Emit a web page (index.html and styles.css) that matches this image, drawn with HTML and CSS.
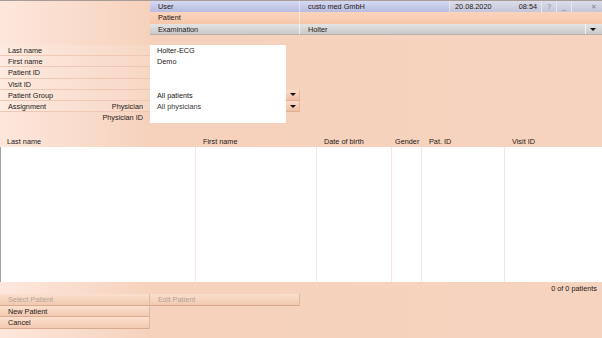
FILE: index.html
```html
<!DOCTYPE html>
<html lang="en">
<head>
    <meta charset="UTF-8">
    <title>Patient</title>
    <link rel="stylesheet" href="styles.css">
</head>
<body>
    <div class="top">
        <div class="topspace"></div>
        <div class="bars">
            <div class="bar user">
                <span class="cell c1">User</span>
                <span class="cell c2">custo med GmbH</span>
                <span class="cell date"><span>20.08.2020</span><span>08:54</span></span>
                <span class="cell ico">?</span>
                <span class="cell ico">_</span>
                <span class="cell close">&#x2715;</span>
            </div>
            <div class="bar patient">
                <span class="cell c1">Patient</span>
                <span class="cell grow"></span>
            </div>
            <div class="bar exam">
                <span class="cell c1">Examination</span>
                <span class="cell grow">Holter</span>
                <span class="arrow"></span>
            </div>
        </div>
    </div>

    <div class="form">
        <div class="lbl">Last name</div>
        <div class="inp">Holter-ECG</div>
        <div></div>
        <div class="lbl">First name</div>
        <div class="inp">Demo</div>
        <div></div>
        <div class="lbl">Patient ID</div>
        <div class="inp"></div>
        <div></div>
        <div class="lbl">Visit ID</div>
        <div class="inp"></div>
        <div></div>
        <div class="lbl">Patient Group</div>
        <div class="inp">All patients</div>
        <div class="drop"><span class="arrow"></span></div>
        <div class="lbl split"><span>Assignment</span><span>Physician</span></div>
        <div class="inp sel">All physicians</div>
        <div class="drop"><span class="arrow"></span></div>
        <div class="lbl noline right">Physician ID</div>
        <div class="inp"></div>
        <div></div>
    </div>

    <div class="table">
        <div class="thead">
            <div class="col w1">Last name</div>
            <div class="col w2">First name</div>
            <div class="col w3">Date of birth</div>
            <div class="col w4">Gender</div>
            <div class="col w5">Pat. ID</div>
            <div class="col w6">Visit ID</div>
        </div>
        <div class="tbody">
            <div class="col w1"></div>
            <div class="col w2"></div>
            <div class="col w3"></div>
            <div class="col w4"></div>
            <div class="col w5"></div>
            <div class="col w6"></div>
        </div>
    </div>

    <div class="count">0 of 0 patients</div>

    <div class="buttons">
        <div class="btnrow">
            <div class="btn off">Select Patient</div>
            <div class="btn off">Edit Patient</div>
        </div>
        <div class="btn">New Patient</div>
        <div class="btn">Cancel</div>
    </div>
</body>
</html>
```

FILE: styles.css
```css
html, body {
    margin: 0;
    padding: 0;
}
body {
    width: 602px;
    height: 338px;
    overflow: hidden;
    font-family: "Liberation Sans", Arial, sans-serif;
    font-size: 7.3px;
    color: #1e1816;
    background: linear-gradient(to right, #fde7dc 0, #f6d2bd 150px, #f6d3be 100%);
    border-top: 1px solid #a89c98;
    box-sizing: border-box;
}

/* top bars */
.top {
    display: flex;
    height: 34px;
}
.topspace {
    width: 150px;
}
.bars {
    flex: 1;
    display: flex;
    flex-direction: column;
}
.bar {
    display: flex;
    height: 11px;
    line-height: 11px;
}
.cell {
    box-sizing: border-box;
    padding-left: 8px;
    border-right: 1px solid rgba(255,255,255,0.5);
}
.c1 { width: 150px; }
.c2 { width: 150px; }
.grow { flex: 1; border-right: 0; }
.user {
    background: linear-gradient(#d6d9f2, #b8bce0);
}
.user .date {
    width: 92px;
    padding: 0 4px 0 5px;
    display: flex;
    justify-content: space-between;
    background: linear-gradient(#dcdde8, #c4c6da);
    border-right: 1px solid #e8e8f0;
}
.user .ico {
    width: 15px;
    padding: 0;
    text-align: center;
    color: #888;
    background: linear-gradient(#dcdde8, #c4c6da);
    border-right: 1px solid #e8e8f0;
}
.user .close {
    flex: 1;
    text-align: right;
    padding-right: 5px;
    color: #888;
    border-right: 0;
    background: linear-gradient(#dcdde8, #c4c6da);
}
.patient {
    background: linear-gradient(#fad4bd, #f7c6a9);
    height: 12px;
    line-height: 12px;
}
.exam {
    background: linear-gradient(#e4e4e4, #c9c9c9);
    border-bottom: 1px solid #b8b0ac;
    height: 10px;
    line-height: 11px;
}
.exam .cell {
    border-right: 1px solid #f2f2f2;
}
.arrow {
    width: 0;
    height: 0;
    border-left: 3px solid transparent;
    border-right: 3px solid transparent;
    border-top: 3px solid #111;
    align-self: center;
    margin: 0 6px 0 4px;
}

/* form */
.form {
    display: grid;
    grid-template-columns: 150px 136px 14px;
    grid-auto-rows: 11.2px;
    margin-top: 10px;
    line-height: 11px;
}
.lbl {
    padding-left: 8px;
    padding-right: 7px;
    border-bottom: 1px solid #efc8b3;
    background: rgba(255,255,255,0.12);
}
.lbl.noline {
    border-bottom: 0;
    background: none;
}
.split {
    display: flex;
    justify-content: space-between;
}
.right {
    text-align: right;
}
.inp {
    background: #fff;
    padding-left: 7px;
}
.sel {
    color: #3a3a3a;
}
.drop {
    display: flex;
    justify-content: center;
    background: linear-gradient(#fbdccb, #efbfa3);
    border-bottom: 1px solid #e0ae92;
    border-right: 1px solid #e6b69b;
    box-sizing: border-box;
}
.drop .arrow {
    margin: 0;
}

/* table */
.table {
    margin-top: 13px;
}
.thead, .tbody {
    display: flex;
}
.thead {
    height: 11px;
    line-height: 11px;
}
.thead .col {
    padding-left: 7px;
}
.thead .w4 {
    padding-left: 3px;
}
.tbody {
    height: 135px;
    background: #fff;
    border-left: 1px solid #a8a09c;
}
.tbody .col {
    border-right: 1px solid #f6e6de;
}
.col {
    box-sizing: border-box;
}
.w1 { width: 196px; }
.w2 { width: 121px; }
.w3 { width: 75px; }
.w4 { width: 30px; }
.w5 { width: 83px; }
.w6 { flex: 1; }
.tbody .w1 { width: 195px; }
.tbody .w6 { border-right: 0; }

.count {
    text-align: right;
    padding-right: 5px;
    line-height: 13px;
    height: 12px;
}

/* buttons */
.buttons {
    width: 300px;
}
.btnrow {
    display: flex;
}
.btnrow .btn {
    width: 150px;
}
.btn {
    width: 150px;
    height: 11.5px;
    line-height: 11.5px;
    box-sizing: border-box;
    padding-left: 8px;
    background: linear-gradient(#fbe0cf, #f3c9b0);
    border-bottom: 1px solid #d8aa90;
    border-right: 1px solid #e0b8a0;
}
.btn.off {
    color: #b4a29a;
}
```
